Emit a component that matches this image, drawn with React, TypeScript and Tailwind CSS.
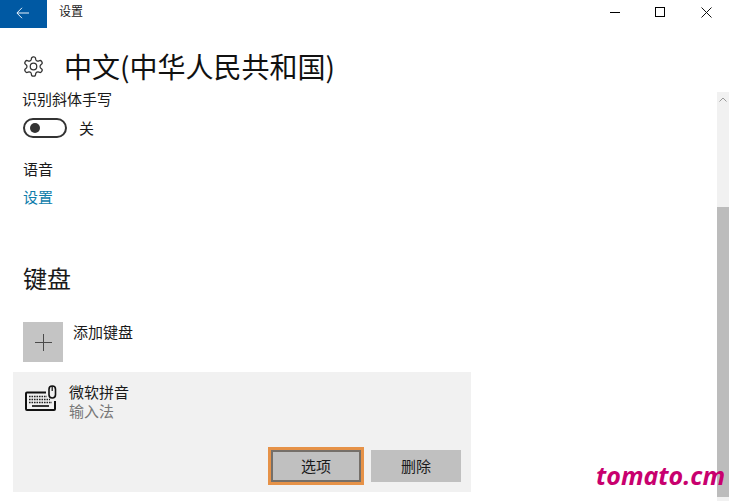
import React from "react";

const font = { cjk: "font-['Noto_Sans_CJK_SC','Noto_Sans',sans-serif]" };

const App: React.FC = () => {
  return (
    <div className={`relative w-[730px] h-[501px] overflow-hidden bg-white text-[#1a1a1a] flex flex-col ${font.cjk}`}>
      {/* title bar */}
      <div className="flex items-center h-[28px] shrink-0">
        <div className="w-[47px] h-[28px] bg-[#0059a3] flex items-center justify-center">
          <svg width="13" height="12" viewBox="0 0 13 12" fill="none" stroke="#e8f2fa" strokeWidth="1" className="-mt-[3px] -ml-[2px]">
            <path d="M13 6H1M6 .8.9 6l5.1 5.2" />
          </svg>
        </div>
        <span className="ml-[12px] text-[12px] leading-none -mt-[6px]">设置</span>
        <div className="ml-auto flex items-center pr-[1px] -mt-[4px]">
          <div className="w-[45px] flex justify-center">
            <div className="w-[10px] h-px bg-black" />
          </div>
          <div className="w-[46px] flex justify-center">
            <div className="w-[10px] h-[10px] border border-black" />
          </div>
          <div className="w-[46px] flex justify-center">
            <svg width="11" height="11" viewBox="0 0 11 11" stroke="#111" strokeWidth="1">
              <path d="M.5.5l10 10M10.5.5l-10 10" />
            </svg>
          </div>
        </div>
      </div>

      <div className="flex flex-1 min-h-0">
        <div className="flex-1 min-w-0">
          {/* heading */}
          <div className="flex items-center h-[44px] mt-[16px] pl-[22px]">
            <svg width="23" height="23" viewBox="0 0 24 24" fill="none" stroke="#333" strokeWidth="1.3" strokeLinejoin="round">
              <path d="M12.22 2h-.44a2 2 0 0 0-2 2v.18a2 2 0 0 1-1 1.73l-.43.25a2 2 0 0 1-2 0l-.15-.08a2 2 0 0 0-2.73.73l-.22.38a2 2 0 0 0 .73 2.73l.15.1a2 2 0 0 1 1 1.72v.51a2 2 0 0 1-1 1.74l-.15.09a2 2 0 0 0-.73 2.73l.22.38a2 2 0 0 0 2.73.73l.15-.08a2 2 0 0 1 2 0l.43.25a2 2 0 0 1 1 1.73V20a2 2 0 0 0 2 2h.44a2 2 0 0 0 2-2v-.18a2 2 0 0 1 1-1.73l.43-.25a2 2 0 0 1 2 0l.15.08a2 2 0 0 0 2.73-.73l.22-.39a2 2 0 0 0-.73-2.73l-.15-.08a2 2 0 0 1-1-1.74v-.5a2 2 0 0 1 1-1.74l.15-.09a2 2 0 0 0 .73-2.73l-.22-.38a2 2 0 0 0-2.73-.73l-.15.08a2 2 0 0 1-2 0l-.43-.25a2 2 0 0 1-1-1.73V4a2 2 0 0 0-2-2z" />
              <circle cx="12" cy="12" r="3.4" />
            </svg>
            <h1 className="ml-[19px] text-[28px] leading-none font-normal text-[#111] whitespace-nowrap">中文(中华人民共和国)</h1>
          </div>

          <div className="pl-[23px]">
            <p className="mt-[1px] text-[15px] leading-[20px] -ml-px">识别斜体手写</p>
            <div className="mt-[9px] flex items-center h-[20px]">
              <div className="w-[44px] h-[20px] rounded-full border-2 border-[#333] flex items-center pl-[5px]">
                <div className="w-[10px] h-[10px] rounded-full bg-[#333]" />
              </div>
              <span className="ml-[12px] text-[15px]">关</span>
            </div>
            <p className="mt-[21px] text-[15px] leading-[20px]">语音</p>
            <p className="mt-[8px] text-[15px] leading-[20px] text-[#0f7dab]">设置</p>
            <h2 className="mt-[56px] text-[24px] leading-[30px] font-normal">键盘</h2>
            <div className="mt-[29px] flex">
              <div className="w-[40px] h-[40px] bg-[#c4c4c4] flex items-center justify-center">
                <svg width="17" height="17" viewBox="0 0 17 17" stroke="#4a4a4a" strokeWidth="1">
                  <path d="M8.5 0v17M0 8.5h17" />
                </svg>
              </div>
              <span className="ml-[10px] text-[15px] leading-[20px]">添加键盘</span>
            </div>
          </div>

          {/* selected keyboard */}
          <div className="mt-[10px] ml-[13px] w-[458px] h-[120px] bg-[#f1f1f1] flex flex-col">
            <div className="flex pt-[10px] pl-[12px]">
              <svg width="32" height="26" viewBox="0 0 32 26" fill="none" className="mt-[3px]">
                <path d="M21 7.5H2a1 1 0 0 0-1 1V24a1 1 0 0 0 1 1h27a1 1 0 0 0 1-1v-8" stroke="#111" strokeWidth="2" />
                <rect x="24" y="1" width="6.5" height="12" rx="3.2" stroke="#111" strokeWidth="1.6" fill="#f1f1f1" />
                <path d="M27.2 1v5" stroke="#111" strokeWidth="1.2" />
                <path d="M4 11.5h18M4 14.5h21M4 17.5h23" stroke="#222" strokeWidth="1.6" strokeDasharray="1.6 0.9" />
                <path d="M7 21h17" stroke="#222" strokeWidth="1.8" />
              </svg>
              <div className="ml-[12px]">
                <p className="text-[15px] leading-[19px]">微软拼音</p>
                <p className="text-[15px] leading-[19px] text-[#777]">输入法</p>
              </div>
            </div>
            <div className="mt-auto mb-[10px] flex justify-end items-center gap-[10px] pr-[10px]">
              <button className="relative w-[90px] h-[32px] bg-[#c0c0c0] border-2 border-[#756f69] outline-[3px] outline-[#e69248] text-[15px]">选项</button>
              <button className="w-[90px] h-[32px] bg-[#c0c0c0] text-[15px]">删除</button>
            </div>
          </div>
        </div>

        {/* scrollbar */}
        <div className="w-[12px] mr-[1px] mt-[64px] bg-[#f1f1f1] flex flex-col shrink-0">
          <div className="h-[14px] flex items-center justify-center">
            <svg width="8" height="5" viewBox="0 0 8 5" fill="none" stroke="#999" strokeWidth="1">
              <path d="M.5 4.5 4 1l3.5 3.5" />
            </svg>
          </div>
          <div className="mt-[101px] h-[290px] bg-[#bcbcbc]" />
        </div>
      </div>

      {/* watermark */}
      <span className="absolute left-[596px] top-[460px] text-[25px] leading-[30px] font-bold italic text-[#c8006e] font-['Open_Sans',sans-serif]">tomato.cm</span>
    </div>
  );
};

export default App;
